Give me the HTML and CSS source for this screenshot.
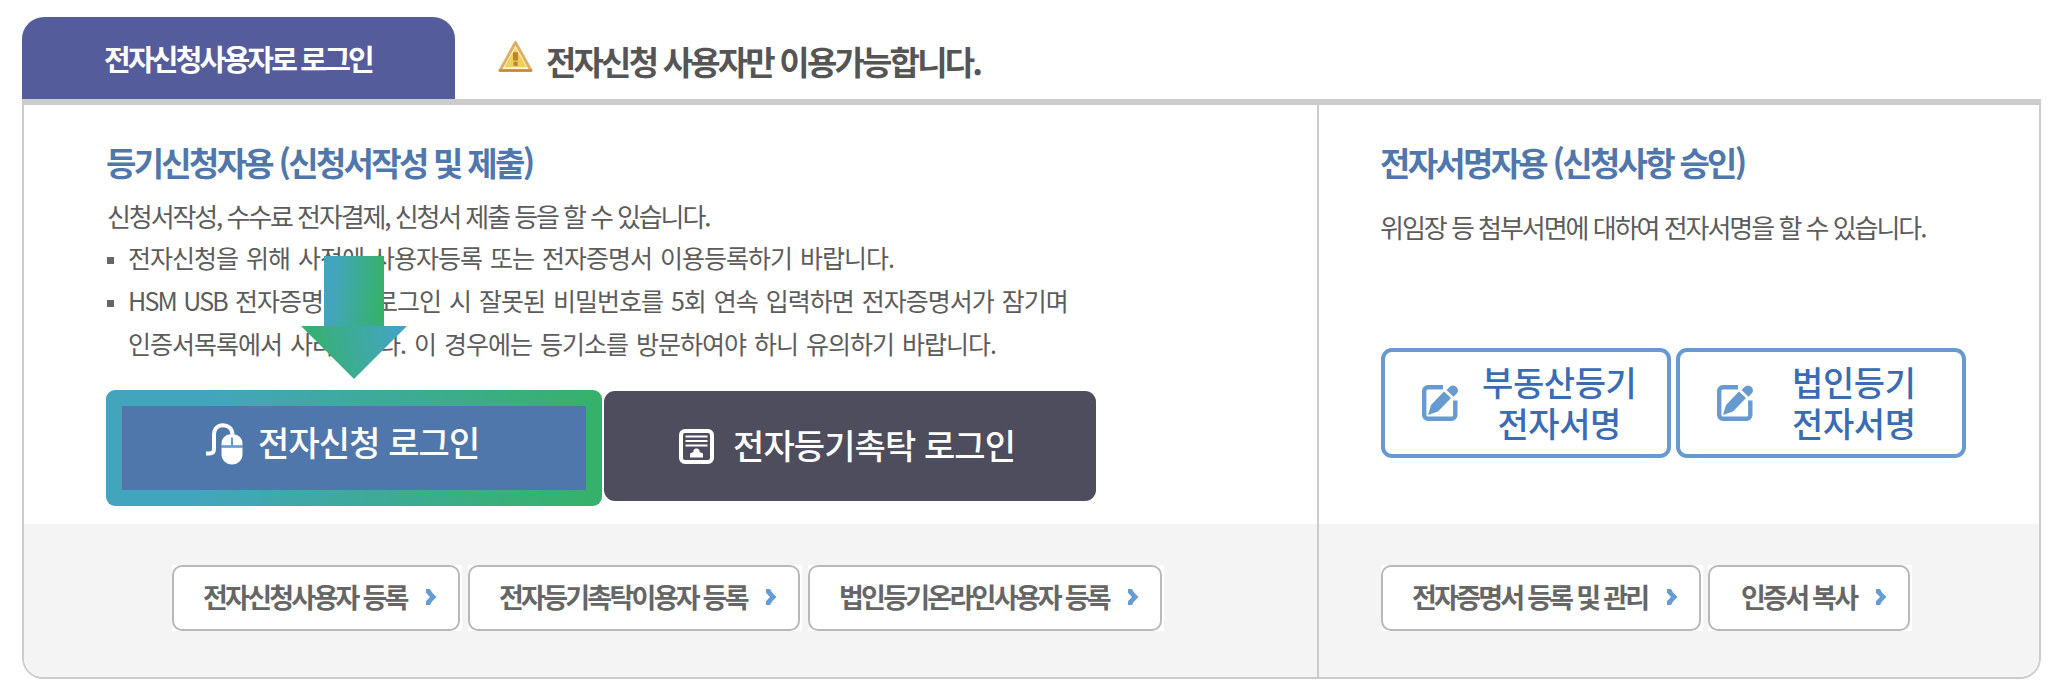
FILE: index.html
```html
<!DOCTYPE html>
<html lang="ko">
<head>
<meta charset="utf-8">
<title>전자신청 로그인</title>
<link rel="stylesheet" href="styles.css">
</head>
<body>
<svg class="defs" width="0" height="0" aria-hidden="true">
  <symbol id="chevron" viewBox="0 0 12 16"><path d="M1 0h4l2 3.500L11.500 8 7 12.500 5 16H1v-3.800L5 8 1 3.800z" fill="#659cd6"/></symbol>
  <symbol id="edit" viewBox="0 0 36 36"><path d="M21 2.200H6a3.800 3.800 0 0 0-3.800 3.800v24A3.800 3.800 0 0 0 6 33.800h23.500a3.800 3.800 0 0 0 3.800-3.800V15.500" fill="none" stroke="#669ad0" stroke-width="4.400"/><path d="M6 30l3-10L22 6.500l7 6.500L16 26.500zM24.500 5l3-3a4.700 4.700 0 0 1 7 0 4.700 4.700 0 0 1 0 6.800l-3 3z" fill="#669ad0"/></symbol>
</svg>
<header class="tabs">
  <div class="tab"><span>전자신청사용자로 로그인</span></div>
  <div class="notice">
    <svg class="warn" viewBox="0 0 35 32">
      <path d="M17.500 1.500L33.500 30.500H1.500z" fill="#fff8dc" stroke="#dfae62" stroke-width="3" stroke-linejoin="round"/>
      <path d="M1.500 30.500h32" stroke="#c98a3a" stroke-width="2.500" stroke-linecap="round"/>
      <path d="M17.500 7L29 27H6z" fill="#edcf5a"/>
      <path d="M15 11.500h5v8.500h-5zM15.500 21.500h4.200v4h-4.200z" fill="#bd8132"/>
    </svg>
    <strong>전자신청 사용자만 이용가능합니다.</strong>
  </div>
</header>
<main class="panel">
  <section class="col">
    <div class="body">
      <h2 class="h-left">등기신청자용 (신청서작성 및 제출)</h2>
      <p class="desc">신청서작성, 수수료 전자결제, 신청서 제출 등을 할 수 있습니다.</p>
      <ul class="notes">
        <li>전자신청을 위해 사전에 사용자등록 또는 전자증명서 이용등록하기 바랍니다.</li>
        <li><span class="latin">HSM USB</span> 전자증명서로 로그인 시 잘못된 비밀번호를 5회 연속 입력하면 전자증명서가 잠기며<br>인증서목록에서 사라집니다. 이 경우에는 등기소를 방문하여야 하니 유의하기 바랍니다.</li>
      </ul>
      <div class="logins">
        <a class="login primary"><span class="face">
          <svg class="i-mouse" viewBox="0 0 37 42">
            <path d="M0 30.500h3.500c3 0 4.500-1.500 4.500-4.500V12C8 5.500 12 2.200 17 2.200S26 5.500 26.500 11" fill="none" stroke="#fff" stroke-width="4"/>
            <path d="M15.500 22.500v-2C15.500 15 20 11 26 11s10.500 4 10.500 9.500v2z" fill="#fff"/>
            <path d="M15.500 24.500h21V31c0 6-4.500 10.500-10.500 10.500S15.500 37 15.500 31z" fill="#fff"/>
            <path d="M26 14.500v8.500M15.500 23.500h21" stroke="#659cd6" stroke-width="2.200"/>
          </svg>
          <span class="t1">전자신청 로그인</span></span></a>
        <a class="login dark">
          <svg class="i-doc" viewBox="0 0 35 35">
            <rect x="2" y="2" width="31" height="31" rx="4" fill="none" stroke="#fff" stroke-width="4"/>
            <path d="M6.500 7.500h22M6.500 12h22M6.500 16.500h22" stroke="#fff" stroke-width="2.200"/>
            <path d="M11 28.500v-4l3.500-1.500v-2l2-1.500h2l2 1.500v2l3.500 1.500v4z" fill="#fff"/>
          </svg>
          <span class="t2">전자등기촉탁 로그인</span></a>
      </div>
      <svg class="arrow" viewBox="0 0 106 123">
        <defs>
          <linearGradient id="g1" x1="0" y1="0" x2="1" y2="0.100"><stop offset=".2" stop-color="#43a5bd"/><stop offset="1" stop-color="#36b16b"/></linearGradient>
          <linearGradient id="g2" x1="0" y1="0" x2="1" y2="-0.100"><stop offset="0" stop-color="#36b16b"/><stop offset=".85" stop-color="#43a5bd"/></linearGradient>
        </defs>
        <path d="M23 0h60v70H23z" fill="url(#g1)"/>
        <path d="M0 70h106L53 123z" fill="url(#g2)"/>
      </svg>
    </div>
    <div class="foot foot-left">
      <a class="link b1"><span>전자신청사용자 등록</span><svg><use href="#chevron"/></svg></a>
      <a class="link b2"><span>전자등기촉탁이용자 등록</span><svg><use href="#chevron"/></svg></a>
      <a class="link b3"><span>법인등기온라인사용자 등록</span><svg><use href="#chevron"/></svg></a>
    </div>
  </section>
  <section class="col col-right">
    <div class="body">
      <h2 class="h-right">전자서명자용 (신청사항 승인)</h2>
      <p class="desc desc-right">위임장 등 첨부서면에 대하여 전자서명을 할 수 있습니다.</p>
      <div class="signs">
        <a class="sign s1"><svg><use href="#edit"/></svg><span>부동산등기<br>전자서명</span></a>
        <a class="sign s2"><svg><use href="#edit"/></svg><span>법인등기<br>전자서명</span></a>
      </div>
    </div>
    <div class="foot foot-right">
      <a class="link b4"><span>전자증명서 등록 및 관리</span><svg><use href="#chevron"/></svg></a>
      <a class="link b5"><span>인증서 복사</span><svg><use href="#chevron"/></svg></a>
    </div>
  </section>
</main>
</body>
</html>
```
FILE: styles.css
```css
* { box-sizing: border-box; }
body {
  margin: 0;
  background: #fff;
  font-family: "Noto Sans CJK KR", sans-serif;
  color: #5c5c5c;
  white-space: nowrap;
}
h2, p, ul { margin: 0; padding: 0; }
svg { display: block; flex: none; overflow: visible; }
.defs { position: absolute; }

.tabs { display: flex; height: 99px; padding: 17px 0 0 22px; }
.tab {
  width: 433px;
  padding: 21px 0 0 82px;
  border-radius: 22px 22px 0 0;
  background: #545c9b;
  color: #fff;
  font-size: 29px;
  font-weight: 700;
  line-height: 40px;
  letter-spacing: -2.800px;
}
.notice { display: flex; padding: 24px 0 0 43px; }
.warn { width: 35px; height: 31px; margin-right: 13px; }
.notice strong {
  font-size: 33px;
  font-weight: 700;
  line-height: 40px;
  letter-spacing: -2.800px;
  color: #555;
}

.panel {
  display: grid;
  grid-template-columns: 1293px 1fr;
  width: 2019px;
  height: 580px;
  margin-left: 22px;
  border: 2px solid #ccc;
  border-top-width: 6px;
  border-radius: 0 0 21px 21px;
  overflow: hidden;
}
.col { display: flex; flex-direction: column; position: relative; }
.col-right { border-left: 2px solid #ccc; }
.body { height: 419px; padding: 37px 0 0 83px; }
.col-right .body { padding-left: 61px; }
.foot { flex: 1; display: flex; align-items: flex-start; padding-top: 41px; background: #f4f4f4; }

h2 { font-size: 33px; font-weight: 700; line-height: 40px; color: #5077ab; }
.h-left { margin-left: -1px; letter-spacing: -2.700px; }
.h-right { letter-spacing: -2.700px; }
.desc { margin-top: 14px; font-size: 26px; line-height: 40px; letter-spacing: -2.100px; }
.desc-right { margin-top: 25px; letter-spacing: -2.030px; }
.notes { list-style: none; font-size: 25px; line-height: 43px; letter-spacing: -1px; word-spacing: 2px; }
.notes li { position: relative; padding-left: 21px; }
.notes li::before { content: ""; position: absolute; left: 0; top: 21px; width: 7px; height: 7px; background: #666; }
.latin { letter-spacing: -1.800px; }

.logins { display: flex; gap: 2px; align-items: flex-start; margin: 25px 0 0 -1px; }
.login { display: flex; color: #fff; font-size: 34px; font-weight: 500; line-height: 44px; letter-spacing: -0.900px; }
.primary { width: 496px; height: 116px; padding: 16px; border-radius: 9px; background: linear-gradient(97deg, #43a5bd 20%, #36b16b 97%); }
.face { display: flex; flex: 1; padding: 17px 0 0 84px; background: #5077ab; }
.i-mouse { width: 37px; height: 42px; margin-right: 15px; }
.t1 { margin-top: -3px; }
.dark { width: 492px; height: 110px; margin-top: 1px; padding: 38px 0 0 75px; border-radius: 11px; background: #4e4d5d; }
.i-doc { width: 35px; height: 35px; margin-right: 19px; }
.t2 { margin-top: -6px; }
.arrow { position: absolute; left: 277px; top: 151px; width: 106px; height: 123px; }

.signs { display: flex; gap: 5px; margin: 101px 0 0 1px; }
.sign {
  display: flex;
  width: 290px;
  height: 110px;
  border: 4px solid #669ad0;
  border-radius: 11px;
  color: #3a6cb5;
  font-size: 34px;
  font-weight: 500;
  line-height: 41px;
  letter-spacing: -0.400px;
  text-align: center;
}
.sign svg { width: 36px; height: 36px; margin: 33px 0 0 37px; }
.sign span { margin-top: 9px; }
.s1 span { margin-left: 24px; }
.s2 span { margin-left: 39px; }

/* White tile with the rounded outline drawn inside it */
.link {
  position: relative;
  display: flex;
  justify-content: space-between;
  height: 66px;
  padding: 12px 25px 0 31px;
  background: #fff;
  color: #666;
  font-size: 27px;
  font-weight: 700;
  line-height: 40px;
  letter-spacing: -2.750px;
}
.link::before {
  content: "";
  position: absolute;
  inset: 0 2px 0 0;
  border: 2px solid #b9b9b9;
  border-radius: 10px;
}
.link svg { width: 12px; height: 16px; margin-top: 12px; }
.foot-left { padding-left: 148px; gap: 6px; }
.foot-right { padding-left: 62px; gap: 5px; }
.b1 { width: 290px; }
.b2 { width: 334px; }
.b3 { width: 356px; }
.b4 { width: 322px; }
.b5 { width: 204px; padding-left: 33px; }
```
